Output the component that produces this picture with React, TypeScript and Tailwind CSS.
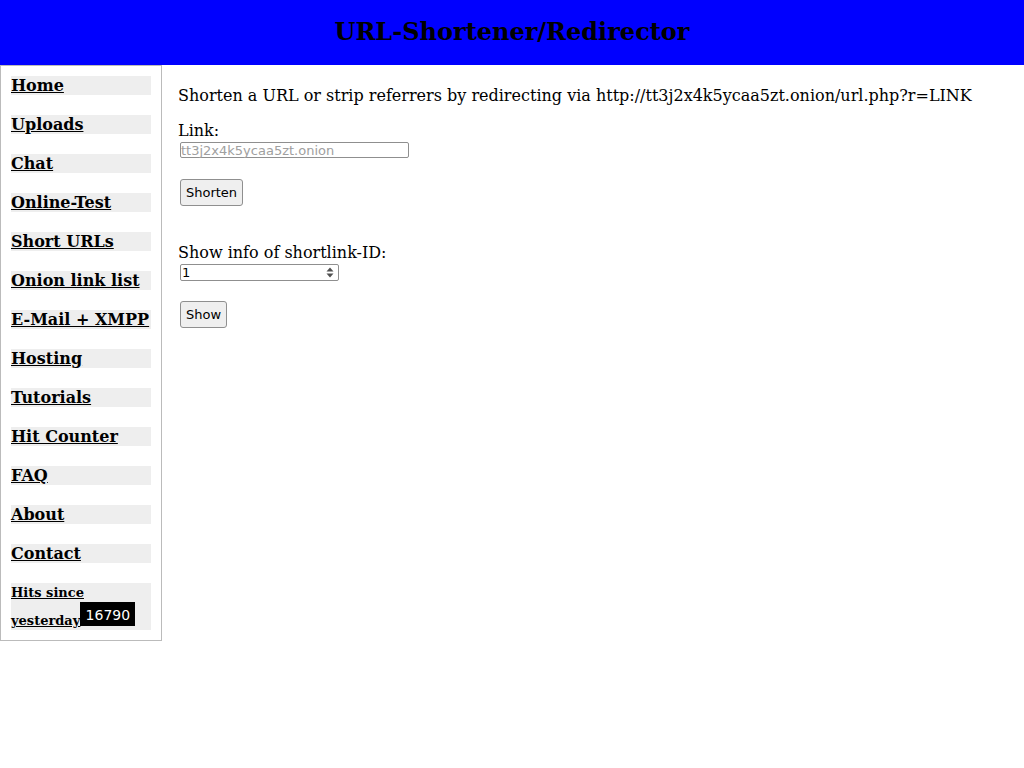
import React from "react";

const navItems = [
  "Home",
  "Uploads",
  "Chat",
  "Online-Test",
  "Short URLs",
  "Onion link list",
  "E-Mail + XMPP",
  "Hosting",
  "Tutorials",
  "Hit Counter",
  "FAQ",
  "About",
  "Contact",
];

export default function App() {
  return (
    <div className="min-h-[768px] bg-white text-black font-['DejaVu_Serif',serif]">
      <header className="h-[65px] bg-[#0000ff] flex items-center justify-center pb-[2px]">
        <h1 className="text-[24px] font-bold leading-[28px] text-black">URL-Shortener/Redirector</h1>
      </header>
      <div className="flex items-start">
        <nav className="w-[162px] shrink-0 border border-[#bbbbbb] p-[10px] flex flex-col gap-[20px]">
          {navItems.map((item) => (
            <a
              key={item}
              href="#"
              className="block h-[19px] w-[140px] bg-[#eeeeee] text-[16px] leading-[19px] font-bold underline text-black"
            >
              {item}
            </a>
          ))}
          <div className="w-[140px] bg-[#eeeeee] text-[13px] font-bold">
            <div className="leading-[19px] underline">Hits since</div>
            <div className="flex items-end h-[28px]">
              <span className="leading-[19px] underline">yesterday</span>
              <span className="mb-[4px] h-[24px] w-[55px] bg-black text-white flex items-center justify-center pt-[1px] font-['DejaVu_Sans',sans-serif] text-[14px] font-normal leading-none">
                16790
              </span>
            </div>
          </div>
        </nav>
        <main className="ml-[16px] pt-[21px] text-[16px] leading-[19px]">
          <p>Shorten a URL or strip referrers by redirecting via http://tt3j2x4k5ycaa5zt.onion/url.php?r=LINK</p>
          <div className="mt-[16px]">Link:</div>
          <div className="ml-[2px] mt-[2px] h-[16px] w-[229px] border border-[#8f8f8f] rounded-[2px] flex items-center font-['DejaVu_Sans',sans-serif] text-[13px] leading-none text-[#a0a0a0]">
            tt3j2x4k5ycaa5zt.onion
          </div>
          <button className="ml-[2px] mt-[21px] h-[27px] w-[63px] border border-[#8f8f8f] rounded-[3px] bg-[#efefef] font-['DejaVu_Sans',sans-serif] text-[13px] leading-none text-black">
            Shorten
          </button>
          <div className="mt-[37px]">Show info of shortlink-ID:</div>
          <div className="ml-[2px] mt-[2px] h-[17px] w-[159px] border border-[#8f8f8f] rounded-[2px] pl-[1px] pr-[4px] flex items-center justify-between font-['DejaVu_Sans',sans-serif] text-[13px] leading-none text-black">
            <span>1</span>
            <svg width="8" height="11" viewBox="0 0 8 11">
              <path d="M4 0.5 L7.5 4.5 L0.5 4.5 Z" fill="#505050" />
              <path d="M4 10.5 L7.5 6.5 L0.5 6.5 Z" fill="#505050" />
            </svg>
          </div>
          <button className="ml-[2px] mt-[20px] h-[27px] w-[47px] border border-[#8f8f8f] rounded-[3px] bg-[#efefef] font-['DejaVu_Sans',sans-serif] text-[13px] leading-none text-black">
            Show
          </button>
        </main>
      </div>
    </div>
  );
}
